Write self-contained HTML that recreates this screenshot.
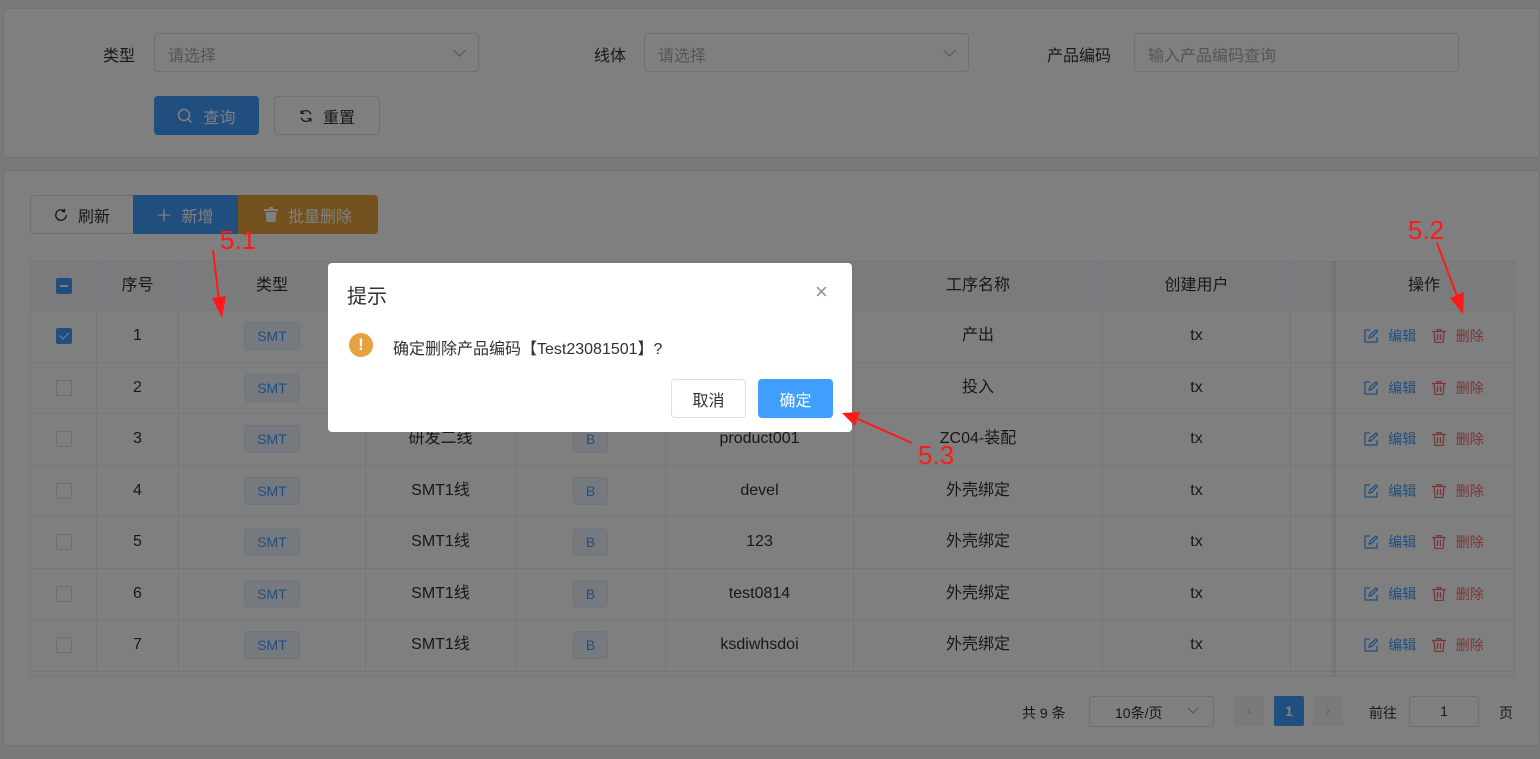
<!DOCTYPE html>
<html><head><meta charset="utf-8"><style>
*{box-sizing:border-box;margin:0;padding:0}
body{width:1540px;height:759px;overflow:hidden;background:#f2f3f5;font-family:"Liberation Sans","Noto Sans CJK SC",sans-serif;font-size:14px;color:#303133;position:relative}
.card{position:absolute;background:#fff;border:1px solid #e6e6e6;border-radius:4px}
.abs{position:absolute}
.lbl{position:absolute;font-size:16px;color:#333}
.inp{position:absolute;height:39px;border:1px solid #dcdfe6;border-radius:4px;color:#a8abb2;font-size:16px;padding:8px 13px;background:#fff}
.chev{position:absolute;right:14px;top:12px;width:9px;height:9px;border-right:1.5px solid #a8abb2;border-bottom:1.5px solid #a8abb2;transform:rotate(45deg)}
.btn{position:absolute;height:39px;border-radius:4px;font-size:16px;display:flex;align-items:center;justify-content:center;gap:10px}
table{position:absolute;left:30px;top:261px;border-collapse:collapse;width:1484px;table-layout:fixed}
td,th{border:1px solid #ebeef5;text-align:center;font-size:16px;font-weight:normal;color:#303133;line-height:20px}
th{height:49px;background:#f5f7fa}
td{height:51.5px}
.cb{display:inline-block;width:16px;height:16px;border:1px solid #dcdfe6;border-radius:2px;vertical-align:middle;background:#fff}
.cb.on{background:#409eff;border-color:#409eff;position:relative}
.tag{display:inline-block;border:1px solid #d9ecff;background:#ecf5ff;color:#409eff;font-size:14px;border-radius:4px;padding:0 12px;height:28px;line-height:26px}
.ops{font-size:14px}
.ed{color:#409eff}.dl{color:#f56c6c}
.ico{display:inline-block;width:14px;height:14px;vertical-align:-2px;margin-right:10px}
.mask{position:absolute;inset:0;background:rgba(0,0,0,.5)}
.dlg{position:absolute;left:328px;top:263px;width:524px;height:169px;background:#fff;border-radius:4px}
.red{position:absolute;color:#ff1a1a;font-size:26px;font-family:"Liberation Sans",sans-serif}
</style></head><body>
<div class="card" style="left:3px;top:8px;width:1537px;height:150px"></div>
<div class="lbl" style="left:103px;top:42px">类型</div>
<div class="inp" style="left:154px;top:33px;width:325px">请选择<span class="chev"></span></div>
<div class="lbl" style="left:594px;top:42px">线体</div>
<div class="inp" style="left:644px;top:33px;width:325px">请选择<span class="chev"></span></div>
<div class="lbl" style="left:1047px;top:42px">产品编码</div>
<div class="inp" style="left:1134px;top:33px;width:325px">输入产品编码查询</div>
<div class="btn" style="left:154px;top:96px;width:105px;background:#409eff;color:#fff"><svg width="16" height="16" viewBox="0 0 16 16" fill="none" stroke="#fff" stroke-width="1.5"><circle cx="7" cy="7" r="5.5"/><path d="M11 11l3.5 3.5"/></svg>查询</div>
<div class="btn" style="left:274px;top:96px;width:106px;border:1px solid #dcdfe6;background:#fff;color:#333"><svg width="14" height="14" viewBox="0 0 16 16" fill="none" stroke="#333" stroke-width="1.5"><path d="M13.5 6A6 6 0 0 0 2.5 5M2.5 1.5v3.5H6M2.5 10a6 6 0 0 0 11 1M13.5 14.5V11H10"/></svg>重置</div>

<div class="card" style="left:3px;top:170px;width:1537px;height:576px"></div>
<div class="btn" style="left:30px;top:195px;width:104px;border:1px solid #dcdfe6;background:#fff;border-radius:4px 0 0 4px;color:#333"><svg width="14" height="14" viewBox="0 0 16 16" fill="none" stroke="#333" stroke-width="1.6"><path d="M14 8A6 6 0 1 1 11.5 3.2M12 1v3h-3"/></svg>刷新</div>
<div class="btn" style="left:133px;top:195px;width:105px;background:#409eff;color:#fff;border-radius:0"><svg width="14" height="14" viewBox="0 0 16 16" stroke="#fff" stroke-width="1.5"><path d="M8 1v14M1 8h14"/></svg>新增</div>
<div class="btn" style="left:238px;top:195px;width:140px;background:#e6a23c;color:#fff;border-radius:0 4px 4px 0"><svg width="14" height="15" viewBox="0 0 14 15" fill="#fff"><rect x="0" y="2" width="14" height="2"/><rect x="5" y="0" width="4" height="2"/><path d="M1.5 5h11l-1 10h-9z"/></svg>批量删除</div>

<table>
<colgroup><col style="width:66px"><col style="width:82px"><col style="width:187px"><col style="width:150px"><col style="width:150px"><col style="width:188px"><col style="width:249px"><col style="width:188px"><col style="width:43px"><col style="width:181px"></colgroup>
<tr><th><span class="cb on"><span style="position:absolute;left:3px;top:6px;width:8px;height:2px;background:#fff"></span></span></th><th>序号</th><th>类型</th><th>线体</th><th>类别</th><th>产品编码</th><th>工序名称</th><th>创建用户</th><th></th><th>操作</th></tr>
<tr><td><span class="cb on"><span style="position:absolute;left:5px;top:1px;width:5px;height:9px;border-right:1.5px solid #fff;border-bottom:1.5px solid #fff;transform:rotate(45deg)"></span></span></td><td>1</td><td><span class="tag">SMT</span></td><td>SMT1线</td><td><span class="tag">B</span></td><td>Test23081501</td><td>产出</td><td>tx</td><td></td><td class="ops"><span class="ed"><svg class="ico" viewBox="0 0 14 14" fill="none" stroke="#409eff" stroke-width="1.3"><path d="M6 1H1v12h12V8M5 9l1-3 6-5 1.5 1.5-6 6z"/></svg>编辑</span>&nbsp;&nbsp;&nbsp;&nbsp;<span class="dl"><svg class="ico" viewBox="0 0 14 14" fill="none" stroke="#f56c6c" stroke-width="1.3"><path d="M0 2.5h14M5 2.5V.7h4v1.8M2 2.5l1 11h8l1-11M5.5 5v6M8.5 5v6"/></svg>删除</span></td></tr>
<tr><td><span class="cb"></span></td><td>2</td><td><span class="tag">SMT</span></td><td>SMT1线</td><td><span class="tag">B</span></td><td>Test2308</td><td>投入</td><td>tx</td><td></td><td class="ops"><span class="ed"><svg class="ico" viewBox="0 0 14 14" fill="none" stroke="#409eff" stroke-width="1.3"><path d="M6 1H1v12h12V8M5 9l1-3 6-5 1.5 1.5-6 6z"/></svg>编辑</span>&nbsp;&nbsp;&nbsp;&nbsp;<span class="dl"><svg class="ico" viewBox="0 0 14 14" fill="none" stroke="#f56c6c" stroke-width="1.3"><path d="M0 2.5h14M5 2.5V.7h4v1.8M2 2.5l1 11h8l1-11M5.5 5v6M8.5 5v6"/></svg>删除</span></td></tr>
<tr><td><span class="cb"></span></td><td>3</td><td><span class="tag">SMT</span></td><td>研发二线</td><td><span class="tag">B</span></td><td>product001</td><td>ZC04-装配</td><td>tx</td><td></td><td class="ops"><span class="ed"><svg class="ico" viewBox="0 0 14 14" fill="none" stroke="#409eff" stroke-width="1.3"><path d="M6 1H1v12h12V8M5 9l1-3 6-5 1.5 1.5-6 6z"/></svg>编辑</span>&nbsp;&nbsp;&nbsp;&nbsp;<span class="dl"><svg class="ico" viewBox="0 0 14 14" fill="none" stroke="#f56c6c" stroke-width="1.3"><path d="M0 2.5h14M5 2.5V.7h4v1.8M2 2.5l1 11h8l1-11M5.5 5v6M8.5 5v6"/></svg>删除</span></td></tr>
<tr><td><span class="cb"></span></td><td>4</td><td><span class="tag">SMT</span></td><td>SMT1线</td><td><span class="tag">B</span></td><td>devel</td><td>外壳绑定</td><td>tx</td><td></td><td class="ops"><span class="ed"><svg class="ico" viewBox="0 0 14 14" fill="none" stroke="#409eff" stroke-width="1.3"><path d="M6 1H1v12h12V8M5 9l1-3 6-5 1.5 1.5-6 6z"/></svg>编辑</span>&nbsp;&nbsp;&nbsp;&nbsp;<span class="dl"><svg class="ico" viewBox="0 0 14 14" fill="none" stroke="#f56c6c" stroke-width="1.3"><path d="M0 2.5h14M5 2.5V.7h4v1.8M2 2.5l1 11h8l1-11M5.5 5v6M8.5 5v6"/></svg>删除</span></td></tr>
<tr><td><span class="cb"></span></td><td>5</td><td><span class="tag">SMT</span></td><td>SMT1线</td><td><span class="tag">B</span></td><td>123</td><td>外壳绑定</td><td>tx</td><td></td><td class="ops"><span class="ed"><svg class="ico" viewBox="0 0 14 14" fill="none" stroke="#409eff" stroke-width="1.3"><path d="M6 1H1v12h12V8M5 9l1-3 6-5 1.5 1.5-6 6z"/></svg>编辑</span>&nbsp;&nbsp;&nbsp;&nbsp;<span class="dl"><svg class="ico" viewBox="0 0 14 14" fill="none" stroke="#f56c6c" stroke-width="1.3"><path d="M0 2.5h14M5 2.5V.7h4v1.8M2 2.5l1 11h8l1-11M5.5 5v6M8.5 5v6"/></svg>删除</span></td></tr>
<tr><td><span class="cb"></span></td><td>6</td><td><span class="tag">SMT</span></td><td>SMT1线</td><td><span class="tag">B</span></td><td>test0814</td><td>外壳绑定</td><td>tx</td><td></td><td class="ops"><span class="ed"><svg class="ico" viewBox="0 0 14 14" fill="none" stroke="#409eff" stroke-width="1.3"><path d="M6 1H1v12h12V8M5 9l1-3 6-5 1.5 1.5-6 6z"/></svg>编辑</span>&nbsp;&nbsp;&nbsp;&nbsp;<span class="dl"><svg class="ico" viewBox="0 0 14 14" fill="none" stroke="#f56c6c" stroke-width="1.3"><path d="M0 2.5h14M5 2.5V.7h4v1.8M2 2.5l1 11h8l1-11M5.5 5v6M8.5 5v6"/></svg>删除</span></td></tr>
<tr><td><span class="cb"></span></td><td>7</td><td><span class="tag">SMT</span></td><td>SMT1线</td><td><span class="tag">B</span></td><td>ksdiwhsdoi</td><td>外壳绑定</td><td>tx</td><td></td><td class="ops"><span class="ed"><svg class="ico" viewBox="0 0 14 14" fill="none" stroke="#409eff" stroke-width="1.3"><path d="M6 1H1v12h12V8M5 9l1-3 6-5 1.5 1.5-6 6z"/></svg>编辑</span>&nbsp;&nbsp;&nbsp;&nbsp;<span class="dl"><svg class="ico" viewBox="0 0 14 14" fill="none" stroke="#f56c6c" stroke-width="1.3"><path d="M0 2.5h14M5 2.5V.7h4v1.8M2 2.5l1 11h8l1-11M5.5 5v6M8.5 5v6"/></svg>删除</span></td></tr>
</table>
<div class="abs" style="left:30px;top:670px;width:1484px;height:7px;border:1px solid #ebeef5;border-top:none"></div>
<div class="abs" style="left:1330px;top:261px;width:6px;height:416px;background:linear-gradient(90deg,rgba(0,0,0,0),rgba(0,0,0,.08))"></div>

<div class="abs" style="left:1022px;top:703px;font-size:14px">共 9 条</div>
<div class="abs" style="left:1089px;top:696px;width:125px;height:31px;border:1px solid #dcdfe6;border-radius:3px;font-size:14px;padding:6px 0 0 25px">10条/页<span class="chev" style="top:7px;right:16px;width:8px;height:8px"></span></div>
<div class="abs" style="left:1234px;top:696px;width:30px;height:30px;background:#f4f4f5;border-radius:2px;color:#c0c4cc;text-align:center;line-height:28px">‹</div>
<div class="abs" style="left:1274px;top:696px;width:30px;height:30px;background:#409eff;border-radius:2px;color:#fff;text-align:center;line-height:30px;font-weight:bold">1</div>
<div class="abs" style="left:1313px;top:696px;width:30px;height:30px;background:#f4f4f5;border-radius:2px;color:#c0c4cc;text-align:center;line-height:28px">›</div>
<div class="abs" style="left:1369px;top:703px">前往</div>
<div class="abs" style="left:1409px;top:696px;width:70px;height:31px;border:1px solid #dcdfe6;border-radius:3px;text-align:center;line-height:29px">1</div>
<div class="abs" style="left:1499px;top:703px">页</div>

<div class="mask"></div>

<div class="dlg">
<div class="abs" style="left:19px;top:17px;font-size:20px;color:#303133">提示</div>
<div class="abs" style="left:487px;top:18px;font-size:22px;color:#909399;line-height:22px">×</div>
<div class="abs" style="left:21px;top:70px;width:24px;height:24px;border-radius:50%;background:#e6a23c;color:#fff;font-weight:bold;text-align:center;line-height:24px;font-size:17px">!</div>
<div class="abs" style="left:65px;top:72px;font-size:16px;color:#303133">确定删除产品编码【Test23081501】?</div>
<div class="btn" style="left:343px;top:116px;width:75px;height:39px;border:1px solid #dcdfe6;color:#303133">取消</div>
<div class="btn" style="left:430px;top:116px;width:75px;height:39px;background:#409eff;color:#fff">确定</div>
</div>

<div class="red" style="left:220px;top:225px">5.1</div>
<div class="red" style="left:1408px;top:215px">5.2</div>
<div class="red" style="left:918px;top:440px">5.3</div>
<svg class="abs" style="left:0;top:0" width="1540" height="759"><g fill="#ff1a1a" stroke="#ff1a1a" stroke-width="2">
<line x1="213" y1="250" x2="219" y2="300"/><polygon points="212,298 226,296 222,318" stroke-width="0"/>
<line x1="1437" y1="243" x2="1457" y2="296"/><polygon points="1450,298 1464,292 1463,314" stroke-width="0"/>
<line x1="912" y1="443" x2="858" y2="419"/><polygon points="860,412 855,426 842,413" stroke-width="0"/>
</g></svg>
</body></html>
